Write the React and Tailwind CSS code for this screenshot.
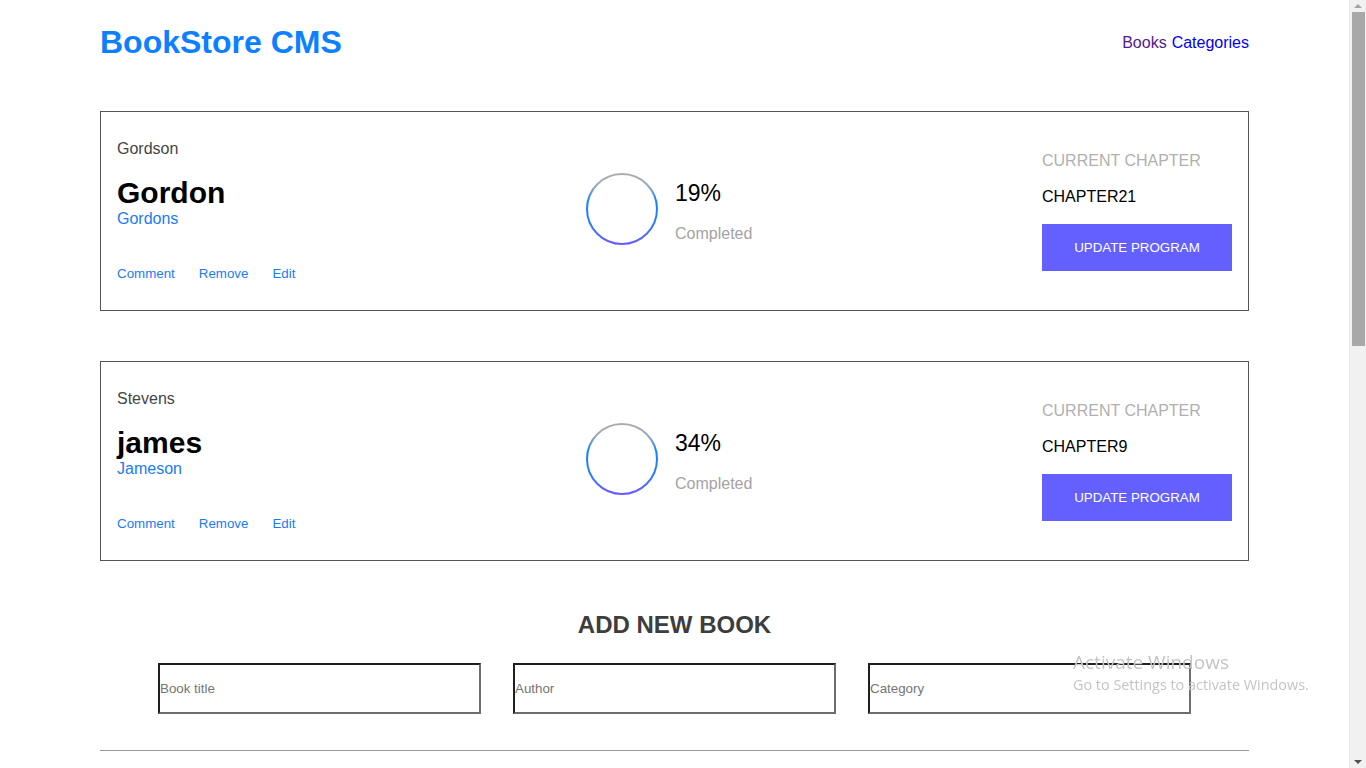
import React from "react";

const books = [
  { id: 1, category: "Gordson", title: "Gordon", author: "Gordons", progress: 19, chapter: "CHAPTER21" },
  { id: 2, category: "Stevens", title: "james", author: "Jameson", progress: 34, chapter: "CHAPTER9" },
];

const Ring = ({ id }) => (
  <svg width="72" height="72" viewBox="0 0 72 72">
    <defs>
      <linearGradient id={id} x1="0" y1="0" x2="0" y2="1">
        <stop offset="0" stopColor="#ababab" />
        <stop offset="0.18" stopColor="#9aa6bd" />
        <stop offset="0.38" stopColor="#1683ff" />
        <stop offset="0.72" stopColor="#2a7cff" />
        <stop offset="1" stopColor="#6b5bff" />
      </linearGradient>
    </defs>
    <circle cx="36" cy="36" r="35" fill="none" stroke={`url(#${id})`} strokeWidth="2" />
  </svg>
);

const BookCard = ({ book }) => (
  <div className="box-border flex h-[200px] border border-[#555] p-4">
    <div className="flex w-[469px] flex-col">
      <p className="mt-[12px] text-[16px] leading-[18px] text-[#444]">{book.category}</p>
      <h2 className="mt-[19px] text-[30px] font-bold leading-[32px] text-black">{book.title}</h2>
      <p className="mt-[1px] text-[16px] leading-[18px] text-[#1a7cf5]">{book.author}</p>
      <div className="mt-[38px] flex gap-6 text-[13.33px] leading-[16px] text-[#1a7cf5]">
        <button type="button">Comment</button>
        <button type="button">Remove</button>
        <button type="button">Edit</button>
      </div>
    </div>

    <div className="flex">
      <div className="mt-[45px]">
        <Ring id={`ring-${book.id}`} />
      </div>
      <div className="ml-[17px] flex flex-col">
        <p className="mt-[51px] text-[23px] leading-[28px] text-black">{book.progress}%</p>
        <p className="mt-[18px] text-[16px] leading-[18px] text-[#a3a3a3]">Completed</p>
      </div>
    </div>

    <div className="ml-auto flex w-[190px] flex-col">
      <p className="mt-[24px] text-[16px] leading-[18px] text-[#b0b0b0]">CURRENT CHAPTER</p>
      <p className="mt-[18px] text-[16px] leading-[18px] text-black">{book.chapter}</p>
      <button
        type="button"
        className="mt-[18px] h-[47px] w-[190px] bg-[#6360ff] text-[13.33px] text-white"
      >
        UPDATE PROGRAM
      </button>
    </div>
  </div>
);

const Scrollbar = () => (
  <div className="pointer-events-none fixed right-0 top-0 flex h-[768px] w-[17px] flex-col items-center border-l border-[#e8e8e8] bg-[#f1f1f1]">
    <div className="flex h-[12px] items-center justify-center">
      <span className="h-0 w-0 border-x-[4px] border-b-[4px] border-x-transparent border-b-[#a3a3a3]" />
    </div>
    <div className="h-[334px] w-[13px] bg-[#a8a8a8]" />
    <div className="flex-1" />
    <div className="flex h-[12px] items-center justify-center">
      <span className="h-0 w-0 border-x-[4px] border-t-[4px] border-x-transparent border-t-[#505050]" />
    </div>
  </div>
);

export default function App() {
  return (
    <div className="min-h-[1690px] bg-white font-['Liberation_Sans',Arial,sans-serif]">
      <div className="ml-[100px] w-[1149px]">
        <header className="flex items-center justify-between pt-[24px]">
          <h1 className="text-[32px] font-bold leading-[37px] text-[#0d80ff]">BookStore CMS</h1>
          <nav className="flex gap-[5px] text-[16px] leading-[18px]">
            <a href="#books" className="text-[#551a8b]">Books</a>
            <a href="#categories" className="text-[#0000ee]">Categories</a>
          </nav>
        </header>

        <main className="mt-[50px] flex flex-col gap-[50px]">
          {books.map((book) => (
            <BookCard key={book.id} book={book} />
          ))}
        </main>

        <section className="mt-[50px]">
          <h2 className="text-center text-[24px] font-bold leading-[28px] text-[#3d3d3d]">ADD NEW BOOK</h2>
          <form className="mt-[24px] flex justify-center gap-8">
            {["Book title", "Author", "Category"].map((ph) => (
              <input
                key={ph}
                placeholder={ph}
                className="box-border h-[51px] w-[323px] border-2 border-t-[#1f1f1f] border-l-[#1f1f1f] border-r-[#6d6d6d] border-b-[#6d6d6d] px-0 text-[13.33px] text-black placeholder:text-[#757575] focus:outline-none"
              />
            ))}
          </form>
          <hr className="mt-[36px] border-t border-[#9a9a9a]" />
        </section>
      </div>

      <div className="pointer-events-none fixed left-[1073px] top-[650px] font-['Open_Sans','Noto_Sans',sans-serif] text-[#c4c4c4]">
        <p className="text-[19px] leading-[24px]">Activate Windows</p>
        <p className="text-[14.4px] leading-[22px]">Go to Settings to activate Windows.</p>
      </div>

      <Scrollbar />
    </div>
  );
}
